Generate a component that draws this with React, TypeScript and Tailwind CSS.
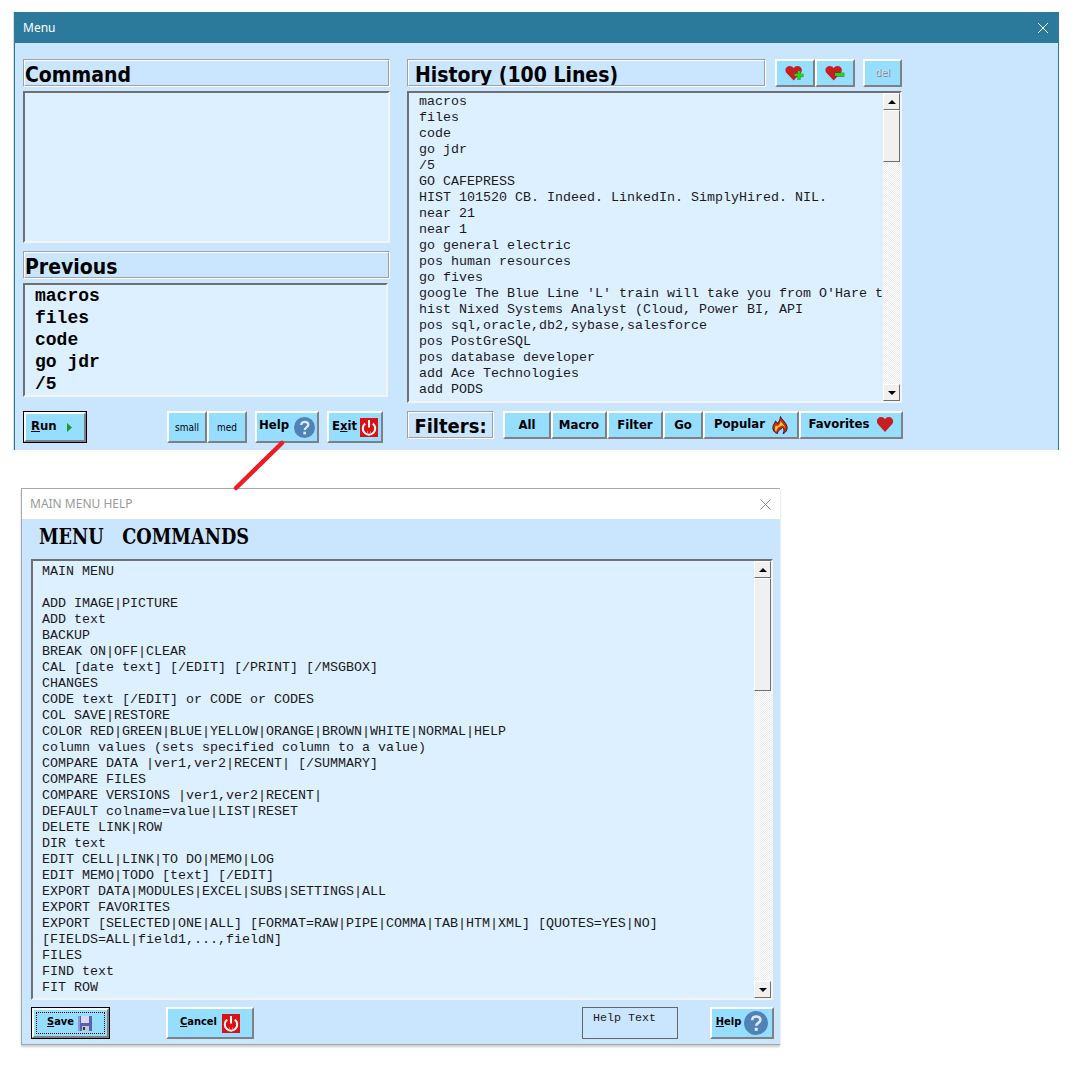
import React from "react";

const mono = "font-['Liberation_Mono','Courier_New',monospace]";
const tahoma = "font-['DejaVu_Sans_Condensed','DejaVu_Sans',sans-serif]";

function Etched({ className = "", children }: { className?: string; children?: React.ReactNode }) {
  return (
    <div className={"border border-t-[#a0a0a0] border-l-[#a0a0a0] border-b-white border-r-white " + className}>
      <div className="h-full w-full border border-t-white border-l-white border-b-[#a0a0a0] border-r-[#a0a0a0] flex items-center overflow-hidden">
        {children}
      </div>
    </div>
  );
}

function Btn({ className = "", children }: { className?: string; children?: React.ReactNode }) {
  return (
    <div className={"border-2 border-t-white border-l-white border-b-[#808080] border-r-[#808080] bg-[#96deff] flex items-center justify-center text-black shrink-0 " + tahoma + " " + className}>
      {children}
    </div>
  );
}

function Power() {
  return (
    <svg width="18" height="19" viewBox="0 0 18 19" className="shrink-0">
      <rect width="18" height="19" fill="#dd1111" />
      <path d="M5.2 5.6 A6.2 6.2 0 1 0 12.8 5.6" fill="none" stroke="#fff" strokeWidth="2" />
      <rect x="8" y="2" width="2" height="7.5" fill="#fff" />
      <path d="M7 14h1M10 14h1" stroke="#fbb" strokeWidth="1" />
    </svg>
  );
}

function Question({ size = 21 }: { size?: number }) {
  return (
    <svg width={size} height={size} viewBox="0 0 22 22" className="shrink-0">
      <circle cx="11" cy="11" r="11" fill="#4f83b8" />
      <path d="M7.5 8.4 C7.5 3.8 15 4 15 8.2 C15 11 11.2 10.8 11.2 13.6" fill="none" stroke="#dfe9f4" strokeWidth="2.4" />
      <rect x="9.8" y="15.4" width="2.8" height="2.8" fill="#dfe9f4" />
    </svg>
  );
}

function HeartShape({ fill = "#c81e1e" }: { fill?: string }) {
  return <path d="M8 15 L1.2 7.6 C-1 4.2 1.4 1 4.4 1 C6 1 7.2 1.8 8 3.2 C8.8 1.8 10 1 11.6 1 C14.6 1 17 4.2 14.8 7.6 Z" fill={fill} />;
}

function HeartMark({ plus }: { plus?: boolean }) {
  return (
    <svg width="20" height="17" viewBox="0 0 20 17" className="shrink-0">
      <g transform="scale(1.08 1.03)"><HeartShape /></g>
      {plus ? (
        <>
          <path d="M9.5 10.5h9M14 6v9" stroke="#444" strokeWidth="3.4" opacity="0.6" />
          <path d="M9.5 10h9M14 6v8.5" stroke="#12e012" strokeWidth="2.4" />
        </>
      ) : (
        <>
          <rect x="9.5" y="7.5" width="10" height="4.5" fill="#444" opacity="0.6" />
          <rect x="10" y="8" width="9" height="3" fill="#12e012" />
        </>
      )}
    </svg>
  );
}

function Flame() {
  return (
    <svg width="16" height="18" viewBox="0 0 16 18" className="shrink-0">
      <path d="M8.5 0.5 C9 3 14 6 15 10.5 C15.7 14 13.5 17 11 17.5 C12.5 15 12.3 12.5 10.5 11.5 C9.5 13.5 6 13.5 5.5 17.5 C2.5 17 0.3 14 1 10.5 C1.4 8.5 2.6 7.5 3.5 5 C4.3 5.6 5 6.4 5.5 7.5 C7 5.5 8.5 3 8.5 0.5Z" fill="#d8261a" stroke="#1a1a1a" strokeWidth="0.9" />
      <path d="M8.5 5 C9.5 7 12.5 8.5 13 12 C12 10.5 11 9 10 9.5 C9 10.5 6.5 10.5 5.5 12.5 C4.5 14 4.2 15 4.2 16 C2.8 14.5 2.6 12 3.6 9.8 C4.6 9.8 5.5 10.2 6.5 9.5 C7.5 8.5 8.5 7 8.5 5Z" fill="#f7d21e" />
    </svg>
  );
}

function Disk() {
  return (
    <svg width="14" height="15" viewBox="0 0 14 15" className="shrink-0">
      <rect width="14" height="15" fill="#5a5fb4" />
      <rect x="0" y="0" width="2" height="15" fill="#8f93d8" />
      <rect x="3" y="0" width="8" height="7" fill="#d8daf5" />
      <rect x="4" y="10" width="7" height="5" fill="#c9c9c9" />
      <rect x="5" y="11" width="2" height="3" fill="#333" />
    </svg>
  );
}

function ScrollBtn({ up }: { up?: boolean }) {
  return (
    <div className="h-[17px] w-full shrink-0 bg-[#f0f0f0] border border-t-white border-l-white border-b-[#707070] border-r-[#707070] flex items-center justify-center">
      <svg width="8" height="4" viewBox="0 0 8 4">
        <path d={up ? "M4 0 L8 4 H0 Z" : "M0 0 H8 L4 4 Z"} fill="#000" />
      </svg>
    </div>
  );
}

function Scrollbar({ thumb }: { thumb: string }) {
  return (
    <div className="w-[17px] shrink-0 h-full flex flex-col bg-[repeating-conic-gradient(#ececec_0%_25%,#ffffff_0%_50%)] bg-size-[2px_2px]">
      <ScrollBtn up />
      <div className={"shrink-0 w-full bg-[#f0f0f0] border border-t-white border-l-white border-b-[#707070] border-r-[#707070] " + thumb} />
      <div className="flex-1" />
      <ScrollBtn />
    </div>
  );
}

const history = [
  "macros",
  "files",
  "code",
  "go jdr",
  "/5",
  "GO CAFEPRESS",
  "HIST 101520 CB. Indeed. LinkedIn. SimplyHired. NIL.",
  "near 21",
  "near 1",
  "go general electric",
  "pos human resources",
  "go fives",
  "google The Blue Line 'L' train will take you from O'Hare t",
  "hist Nixed Systems Analyst (Cloud, Power BI, API",
  "pos sql,oracle,db2,sybase,salesforce",
  "pos PostGreSQL",
  "pos database developer",
  "add Ace Technologies",
  "add PODS",
];

const help = [
  "MAIN MENU",
  " ",
  "ADD IMAGE|PICTURE",
  "ADD text",
  "BACKUP",
  "BREAK ON|OFF|CLEAR",
  "CAL [date text] [/EDIT] [/PRINT] [/MSGBOX]",
  "CHANGES",
  "CODE text [/EDIT] or CODE or CODES",
  "COL SAVE|RESTORE",
  "COLOR RED|GREEN|BLUE|YELLOW|ORANGE|BROWN|WHITE|NORMAL|HELP",
  "column values (sets specified column to a value)",
  "COMPARE DATA |ver1,ver2|RECENT| [/SUMMARY]",
  "COMPARE FILES",
  "COMPARE VERSIONS |ver1,ver2|RECENT|",
  "DEFAULT colname=value|LIST|RESET",
  "DELETE LINK|ROW",
  "DIR text",
  "EDIT CELL|LINK|TO DO|MEMO|LOG",
  "EDIT MEMO|TODO [text] [/EDIT]",
  "EXPORT DATA|MODULES|EXCEL|SUBS|SETTINGS|ALL",
  "EXPORT FAVORITES",
  "EXPORT [SELECTED|ONE|ALL] [FORMAT=RAW|PIPE|COMMA|TAB|HTM|XML] [QUOTES=YES|NO]",
  "[FIELDS=ALL|field1,...,fieldN]",
  "FILES",
  "FIND text",
  "FIT ROW",
];

const sunken = "border-2 border-t-[#707070] border-l-[#707070] border-b-[#f4f4f4] border-r-[#f4f4f4] bg-[#ddf0ff]";

function U({ children }: { children: React.ReactNode }) {
  return <span className="underline">{children}</span>;
}

export default function App() {
  return (
    <div className="relative w-[1076px] h-[1070px] bg-white overflow-hidden pt-3 pl-[14px]">
      {/* Menu window */}
      <div className="w-[1045px] h-[438px] border-x border-[#2c7a9b] bg-[#cae6fe] flex flex-col shadow-[-1px_0_0_#dddddd]">
        <div className="h-[31px] shrink-0 bg-[#2c7a9b] flex items-center justify-between pl-2 pr-[9px] text-white text-[12px] font-['Noto_Sans',sans-serif]">
          <span>Menu</span>
          <svg width="12" height="12" viewBox="0 0 12 12">
            <path d="M1 1 L11 11 M11 1 L1 11" stroke="#fff" strokeWidth="1" />
          </svg>
        </div>
        <div className="flex gap-[17px] pl-2 pt-4">
          {/* left */}
          <div className="w-[367px] flex flex-col">
            <Etched className="h-7">
              <span className={"pt-[4px] leading-[24px] text-[21px] font-bold text-black " + tahoma}>Command</span>
            </Etched>
            <div className={"mt-1 h-[152px] " + sunken} />
            <Etched className="mt-2 h-7">
              <span className={"pt-[4px] leading-[24px] text-[21px] font-bold text-black " + tahoma}>Previous</span>
            </Etched>
            <div className={"mt-1 h-[114px] w-[365px] pl-[10px] font-bold text-[18px] leading-[22px] text-black " + sunken + " " + mono}>
              <div>macros</div>
              <div>files</div>
              <div>code</div>
              <div>go jdr</div>
              <div>/5</div>
            </div>
            <div className="mt-[14px] flex items-start">
              <div className="border border-black">
                <Btn className="w-[62px] h-[30px] font-bold text-[13px] gap-[10px] !justify-start pl-[5px]">
                  <span className="pb-[3px]"><U>R</U>un</span>
                  <svg width="5" height="9" viewBox="0 0 5 9"><path d="M0 0 L5 4.5 L0 9 Z" fill="#1f9a2a" /></svg>
                </Btn>
              </div>
              <Btn className="ml-20 w-10 h-8 text-[10px]">small</Btn>
              <Btn className="w-10 h-8 text-[10px]">med</Btn>
              <Btn className="ml-2 w-16 h-8 font-bold text-[13px] gap-[5px] !justify-start pl-[2px]">
                <span className="pb-[4px]">Help</span>
                <Question />
              </Btn>
              <Btn className="ml-2 w-14 h-8 font-bold text-[13px] gap-[3px]">
                <span className="pb-[3px]">E<U>x</U>it</span>
                <Power />
              </Btn>
            </div>
          </div>
          {/* right */}
          <div className="w-[496px] flex flex-col">
            <div className="flex items-start h-7">
              <Etched className="h-7 w-[359px]">
                <span className={"pl-[6px] pt-[4px] leading-[24px] text-[21px] font-bold text-black " + tahoma}>History (100 Lines)</span>
              </Etched>
              <Btn className="ml-[9px] w-10 h-7"><HeartMark plus /></Btn>
              <Btn className="w-10 h-7"><HeartMark /></Btn>
              <Btn className="ml-2 w-[39px] h-7 text-[11px]"><span className="text-[#c4e0ea] [text-shadow:1px_1px_0_#808080]">del</span></Btn>
            </div>
            <div className={"mt-1 h-[312px] w-[495px] flex justify-between overflow-hidden " + sunken}>
              <div className={"pl-[10px] pt-[1px] text-[13.33px] leading-4 whitespace-pre overflow-hidden text-[#1a1a1a] flex-1 " + mono}>
                {history.map((l, i) => (<div key={i}>{l}</div>))}
              </div>
              <Scrollbar thumb="h-[52px]" />
            </div>
            <div className="mt-2 flex items-start">
              <Etched className="h-7 w-[87px]">
                <span className={"w-full text-center pt-[1px] text-[20px] font-bold text-black " + tahoma}>Filters:</span>
              </Etched>
              <Btn className="ml-[9px] w-12 h-7 font-bold text-[13px]">All</Btn>
              <Btn className="w-14 h-7 font-bold text-[13px]">Macro</Btn>
              <Btn className="w-14 h-7 font-bold text-[13px]">Filter</Btn>
              <Btn className="w-10 h-7 font-bold text-[13px]">Go</Btn>
              <Btn className="w-24 h-7 font-bold text-[13px] gap-[7px]">
                <span className="pb-[3px]">Popular</span>
                <Flame />
              </Btn>
              <Btn className="w-[104px] h-7 font-bold text-[13px] gap-[6px]">
                <span className="pb-[3px]">Favorites</span>
                <svg width="18" height="17" viewBox="0 0 16 16" className="shrink-0 mb-[2px]"><HeartShape /></svg>
              </Btn>
            </div>
          </div>
        </div>
      </div>

      {/* Help dialog */}
      <div className="mt-[38px] ml-[7px] w-[759px] h-[557px] border border-r-0 border-[#a8a8a8] shadow-[0_2px_2px_#cccccc] flex flex-col bg-[#cae6fe]">
        <div className="h-[30px] shrink-0 bg-white flex items-center justify-between pl-2 pr-[9px] text-[#9a9a9a] text-[12px] font-['Noto_Sans',sans-serif]">
          <span>MAIN MENU HELP</span>
          <svg width="11" height="11" viewBox="0 0 11 11">
            <path d="M0.5 0.5 L10.5 10.5 M10.5 0.5 L0.5 10.5" stroke="#8a8a8a" strokeWidth="1" />
          </svg>
        </div>
        <div className="h-[40px] shrink-0 pl-[17px] pt-[3px]">
          <div className="origin-left scale-x-[0.77] text-[23px] leading-[28px] font-bold font-['DejaVu_Serif',serif] text-black whitespace-pre">
            {"MENU   COMMANDS"}
          </div>
        </div>
        <div className={"ml-[9px] w-[742px] h-[441px] flex justify-between overflow-hidden " + sunken}>
          <div className={"pl-[9px] pt-[3px] text-[13.33px] leading-4 whitespace-pre overflow-hidden text-[#1a1a1a] flex-1 " + mono}>
            {help.map((l, i) => (<div key={i}>{l}</div>))}
          </div>
          <Scrollbar thumb="h-[113px]" />
        </div>
        <div className="mt-[7px] pl-[9px] flex items-start">
          <div className="border border-black">
            <Btn className="w-[77px] h-[30px] text-[11px] font-bold gap-[4px] !justify-start pl-[13px] outline-1 outline-dotted outline-black -outline-offset-5">
              <span className="pb-[2px]"><U>S</U>ave</span>
              <Disk />
            </Btn>
          </div>
          <Btn className="ml-14 w-[88px] h-8 text-[11px] font-bold gap-[5px]">
            <span className="pb-[2px]"><U>C</U>ancel</span>
            <Power />
          </Btn>
          <div className={"ml-[328px] w-24 h-8 border border-[#666] pl-[10px] text-[11.67px] leading-[20px] text-[#1a1a1a] " + mono}>Help Text</div>
          <Btn className="ml-[32px] w-16 h-8 text-[11px] font-bold gap-[3px]">
            <span className="pb-[2px]"><U>H</U>elp</span>
            <Question size={24} />
          </Btn>
        </div>
      </div>

      {/* red connector arrow */}
      <svg className="absolute left-[230px] top-[438px]" width="60" height="58" viewBox="0 0 60 58">
        <path d="M52 5 L6 50" stroke="#ee1c25" strokeWidth="4.5" strokeLinecap="round" />
      </svg>
    </div>
  );
}
